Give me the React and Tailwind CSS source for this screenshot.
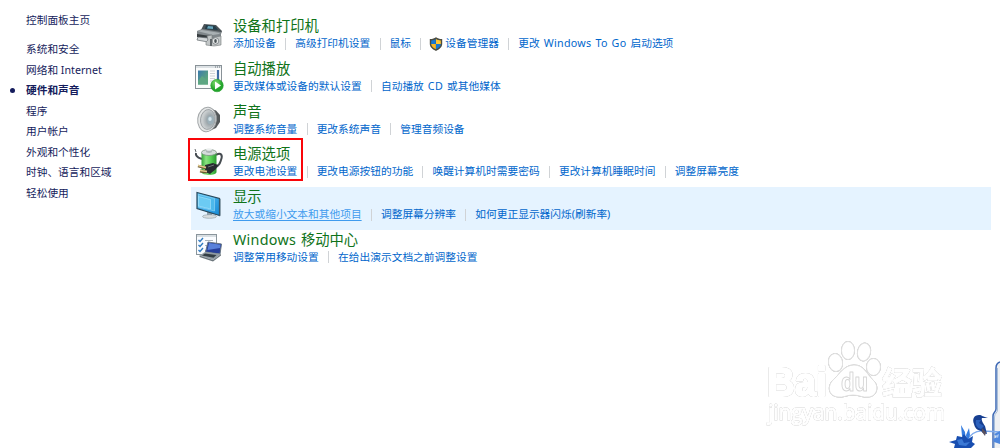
import clsx from 'clsx';

const sideLinks = [
  { label: '系统和安全' },
  { label: '网络和 Internet' },
  { label: '硬件和声音', active: true },
  { label: '程序' },
  { label: '用户帐户' },
  { label: '外观和个性化' },
  { label: '时钟、语言和区域' },
  { label: '轻松使用' },
];

const categories = [
  {
    title: '设备和打印机',
    icon: PrinterIcon,
    links: [
      { label: '添加设备' },
      { label: '高级打印机设置' },
      { label: '鼠标' },
      { label: '设备管理器', shield: true },
      { label: '更改 Windows To Go 启动选项' },
    ],
  },
  {
    title: '自动播放',
    icon: AutoplayIcon,
    links: [{ label: '更改媒体或设备的默认设置' }, { label: '自动播放 CD 或其他媒体' }],
  },
  {
    title: '声音',
    icon: SpeakerIcon,
    links: [{ label: '调整系统音量' }, { label: '更改系统声音' }, { label: '管理音频设备' }],
  },
  {
    title: '电源选项',
    icon: BatteryIcon,
    marked: true,
    links: [
      { label: '更改电池设置' },
      { label: '更改电源按钮的功能' },
      { label: '唤醒计算机时需要密码' },
      { label: '更改计算机睡眠时间' },
      { label: '调整屏幕亮度' },
    ],
  },
  {
    title: '显示',
    icon: DisplayIcon,
    hovered: true,
    links: [
      { label: '放大或缩小文本和其他项目', hovered: true },
      { label: '调整屏幕分辨率' },
      { label: '如何更正显示器闪烁(刷新率)' },
    ],
  },
  {
    title: 'Windows 移动中心',
    icon: MobilityIcon,
    links: [{ label: '调整常用移动设置' }, { label: '在给出演示文档之前调整设置' }],
  },
];

function PrinterIcon() {
  return (
    <svg viewBox="0 0 32 32" className="size-8">
      <path d="M11 5 23 6 29 12 28 15 7 13Z" fill="#4b5357" />
      <path d="M13 6 22 7 25 11 12 10Z" fill="#233e4b" />
      <path d="M15 7 20 7.5 20 10 14 9.500Z" fill="#68a6bd" />
      <path d="m4 12 5-2 19 3v7l-6 2L4 17Z" fill="#80878b" />
      <path d="M4 12 9 11l18 3-1 1-6 1Z" fill="#a9b0b3" />
      <path d="M4 15 17 17v3L4 18Z" fill="#353b3e" />
      <path d="M5 18 15 19v4L4 21Z" fill="#d4d8da" stroke="#62696d" strokeWidth=".7" />
      <path d="M14 17 19 16v4l3-2 6-1v9l-7 1-8-1v-3l2-2Z" fill="#c2c6c7" stroke="#74797b" strokeWidth=".6" />
      <path d="M17 20h2v7h-2Z" fill="#5f6568" />
      <circle cx="22.500" cy="22" r="3.300" fill="#e9ebeb" stroke="#737a7d" strokeWidth=".8" />
      <ellipse cx="22.500" cy="22" rx="1.300" ry="2" fill="#4b5356" />
    </svg>
  );
}

function AutoplayIcon() {
  return (
    <svg viewBox="0 0 32 32" className="size-8">
      <defs>
        <linearGradient id="film" x1="0" y1="0" x2="1" y2="1">
          <stop offset="0" stopColor="#3a78ad" />
          <stop offset="1" stopColor="#68b56e" />
        </linearGradient>
        <radialGradient id="play" cx=".4" cy=".3">
          <stop offset="0" stopColor="#83dc72" />
          <stop offset="1" stopColor="#23a52b" />
        </radialGradient>
      </defs>
      <rect x="2.500" y="3.500" width="26" height="23" fill="#fbfcfc" stroke="#899298" />
      <path d="M3 4h25v2H3Z" fill="#dce1e4" />
      <path d="M22 5h1M24 5h1M26 5h1" stroke="#69737a" />
      <rect x="5" y="8.500" width="10" height="14" fill="url(#film)" />
      <path d="M5 19 9 14 15 19v3.500H5Z" fill="#5da683" />
      <path d="M17 9h5M17 11.500h5M17 14h5M17 16.500h5M17 19h3" stroke="#cdd3d6" />
      <path d="M25 8v10" stroke="#3d6ca5" strokeWidth="2.200" />
      <circle cx="24" cy="23.500" r="6.300" fill="url(#play)" stroke="#249b2c" strokeWidth=".5" />
      <path d="m22 19.500 6 4-6 4Z" fill="#fff" />
    </svg>
  );
}

function SpeakerIcon() {
  return (
    <svg viewBox="0 0 32 32" className="size-8">
      <defs>
        <radialGradient id="cone" cx=".65" cy=".5">
          <stop offset="0" stopColor="#c5d6df" />
          <stop offset=".3" stopColor="#929da2" />
          <stop offset="1" stopColor="#c9cdcf" />
        </radialGradient>
      </defs>
      <path d="M15 3 23 5.500 27 10v7L23 23l-9 4Z" fill="#55595b" />
      <ellipse cx="14" cy="14.500" rx="9.300" ry="12.300" transform="rotate(7 14 14.500)" fill="#e5e7e7" stroke="#a3a7a9" />
      <ellipse cx="14.800" cy="14.500" rx="7.300" ry="10" transform="rotate(7 14.800 14.500)" fill="url(#cone)" stroke="#8b9194" strokeWidth=".7" />
      <ellipse cx="17.500" cy="15" rx="3.300" ry="4.200" fill="#9db0b9" />
      <ellipse cx="17" cy="14" rx="1.700" ry="2.100" fill="#d5e5ec" />
    </svg>
  );
}

function BatteryIcon() {
  return (
    <svg viewBox="0 0 32 32" className="size-8">
      <defs>
        <linearGradient id="cell">
          <stop offset="0" stopColor="#35a53b" />
          <stop offset=".3" stopColor="#8be382" />
          <stop offset=".65" stopColor="#55cf53" />
          <stop offset="1" stopColor="#2d9833" />
        </linearGradient>
      </defs>
      <path d="M23 8c5-3 7 0 5 5-1 3-1 5-5 7" fill="none" stroke="#464c51" strokeWidth="2" />
      <path d="M3 6c-1 4 3 5 6 6" fill="none" stroke="#464c51" strokeWidth="2" />
      <path d="m2 2 1 3" stroke="#62686b" />
      <path d="M8.500 6v19c0 4 15 4 15 0V6Z" fill="url(#cell)" />
      <ellipse cx="16" cy="5.500" rx="7.500" ry="3" fill="#d5dcdb" stroke="#7b9180" strokeWidth=".8" />
      <path d="M13 2.500v2.300c0 1.500 6 1.500 6 0V2.500Z" fill="#aeb7b8" />
      <ellipse cx="16" cy="2.500" rx="3" ry="1.300" fill="#edf0f0" />
      <path d="m12 18 8-2 5 2-2 4-6 5-5-2Z" fill="#272c30" />
      <path d="m5 19 8 2M7 24l7 1" stroke="#6b5831" strokeWidth="2.800" />
      <path d="m5 18.500 8 2M7 23.500l7 1" stroke="#e2ca8e" strokeWidth="1.400" />
      <path d="m15 20 6-2" stroke="#70757a" />
    </svg>
  );
}

function DisplayIcon() {
  return (
    <svg viewBox="0 0 32 32" className="size-8">
      <defs>
        <linearGradient id="screen" x1="0" y1="0" x2="1" y2="1">
          <stop offset="0" stopColor="#65c8f5" />
          <stop offset="1" stopColor="#168bd7" />
        </linearGradient>
      </defs>
      <path d="m14 21 5 2v3h-5Z" fill="#8fa0aa" />
      <ellipse cx="16.500" cy="26.500" rx="7" ry="1.800" fill="#d8dddf" stroke="#8b989f" strokeWidth=".6" />
      <path d="M4 2.500 26.500 8.500v17L4 18.500Z" fill="url(#screen)" stroke="#27475a" strokeWidth="1.200" />
      <path d="m5.500 4.500 16 4v12.500l-16-4Z" fill="#4db9ec" stroke="#a4dff8" strokeWidth=".5" />
      <path d="m5.500 6.500 12 3V19l-12-3Z" fill="#6ccbf3" stroke="#b8eaff" strokeWidth=".5" />
      <path d="m26.500 8.500 1 .5v16.500l-1 1Z" fill="#526a79" />
    </svg>
  );
}

function MobilityIcon() {
  return (
    <svg viewBox="0 0 32 32" className="size-8">
      <rect x="3.500" y="1.500" width="20" height="20" fill="#fafcff" stroke="#8a959c" />
      <path d="M4 2h19v2H4Z" fill="#d8dee2" />
      <path d="m5.500 7 1.500 1.500L10 5M5.500 12l1.500 1.500L10 10M5.500 17l1.500 1.500L10 15" fill="none" stroke="#317bc0" strokeWidth="1.400" />
      <path d="M12 7.500h8M12 12.500h3M12 17.500h1" stroke="#a9b3bb" />
      <path d="m15 9 13.500 2-1.500 10L12.500 19Z" fill="#273f9b" stroke="#687785" />
      <path d="m16 10 11.500 1.700-.500 3.300L14.500 17Z" fill="#5981da" />
      <path d="m12 19 16 2-8 6L6.500 22.500Z" fill="#929ca4" />
      <path d="m12 20.500 11.500 1.500-3 2.800L9 22.500Z" fill="#343e45" />
      <path d="m6.500 22.500 13.500 4.500 8-6v1.500L20 28.500 6.500 24Z" fill="#6c767c" />
    </svg>
  );
}

function ShieldIcon() {
  return (
    <svg viewBox="0 0 14 14" className="mr-0.5 -ml-px size-3.5 shrink-0">
      <path d="M7 .3C5 1.800 3 2.100.8 2V7c0 3 3 5.500 6.200 6.900C10.200 12.500 13.200 10 13.200 7V2C11 2.100 9 1.800 7 .3Z" fill="#4b4c42" />
      <path d="M6.800 2C5.500 3 4 3.400 2.200 3.400V7h4.600Z" fill="#1878d2" />
      <path d="M7 2c1.500 1 3 1.400 4.800 1.400V7H7Z" fill="#ffc632" />
      <path d="M2.200 7h4.700v5.200C4 11 2.300 9 2.200 7Z" fill="#f7b723" />
      <path d="M7 7h4.800c0 2-2 4.200-4.800 5.200Z" fill="#1878d2" />
    </svg>
  );
}

// Latin words get slightly looser tracking than the Chinese around them
function MixedText({ text }) {
  return text
    .split(/([A-Za-z][A-Za-z ]*[A-Za-z])/)
    .map((part, i) => (i % 2 ? <span key={i} className="tracking-[0.3px] [word-spacing:0.8px]">{part}</span> : part));
}

function Sidebar() {
  return (
    <nav className="w-[191px] shrink-0 pt-2.5 pl-[26px] text-[10.7px] leading-5 text-[#151c5c]">
      <a className="block">控制面板主页</a>
      <ul className="mt-[9px]">
        {sideLinks.map((link) => (
          <li key={link.label} className={clsx('flex h-[20.5px] items-center', link.active && 'font-bold')}>
            {link.active && <span className="mr-[11px] -ml-4 size-[5px] rounded-full bg-[#151c5c]" />}
            {link.label}
          </li>
        ))}
      </ul>
    </nav>
  );
}

function Category({ title, icon: Icon, links, hovered, marked }) {
  return (
    <section className={clsx('relative flex h-[42.800px] pl-[2px]', hovered && 'bg-[#e5f3ff]')}>
      <div className="mt-[3px] w-10 shrink-0">
        <Icon />
      </div>
      <div className="whitespace-nowrap">
        <h2 className="h-5 text-[14.3px] leading-5 text-[#0f7319] [word-spacing:1px]">
          <MixedText text={title} />
        </h2>
        <div className="flex h-[15px] items-center text-[10.73px] text-[#0066cc] [word-spacing:1.2px]">
          {links.map((link, i) => (
            <div key={link.label} className="flex items-center">
              {i > 0 && <span className="mr-[9px] ml-[9.3px] h-3 w-px bg-[#d0d3d6]" />}
              {link.shield && <ShieldIcon />}
              <a className={clsx('-mt-px whitespace-pre', link.hovered && 'text-[#3f9bee] underline underline-offset-2')}>
                <MixedText text={link.label} />
              </a>
            </div>
          ))}
        </div>
      </div>
      {marked && <div className="absolute -top-[6.400px] -left-[3px] h-[43px] w-[115px] border-2 border-[#fa0509]" />}
    </section>
  );
}

function Watermark() {
  return (
    <svg
      viewBox="0 0 190 96"
      className="absolute top-[338px] left-[762px] h-[96px] w-[190px] overflow-visible [filter:drop-shadow(0_0_0.7px_#aaa)]"
    >
      <g fill="#fff" stroke="#fff" strokeLinejoin="round">
        <g stroke="#e2e2e2" strokeWidth="1">
          <ellipse cx="73.500" cy="24.500" rx="7" ry="9" transform="rotate(-10 73.500 24.500)" />
          <ellipse cx="86" cy="12.500" rx="6.500" ry="9" />
          <ellipse cx="102" cy="14" rx="6.500" ry="9" transform="rotate(12 102 14)" />
          <ellipse cx="111.500" cy="29" rx="7" ry="8.500" />
          <path d="M92 27c10 0 12 8 19 15 7 6 4 17-5 17-5 1-9-2-15-2s-10 3-15 2c-10-1-11-11-5-17 7-6 11-15 21-15Z" />
        </g>
        <g fontWeight="700" className="font-['Liberation_Sans','Noto_Sans_CJK_SC',sans-serif]">
          <text x="5" y="58" fontSize="40" strokeWidth="2" textLength="60" lengthAdjust="spacingAndGlyphs">Bai</text>
          <text x="79" y="53" fontSize="25" stroke="#d6d6d6" strokeWidth="1" textLength="27" lengthAdjust="spacingAndGlyphs">du</text>
          <text x="120" y="56" fontSize="31" strokeWidth="1" textLength="60" lengthAdjust="spacingAndGlyphs">经验</text>
        </g>
        <text x="6" y="82" fontSize="21" strokeWidth="1" textLength="177" lengthAdjust="spacingAndGlyphs" className="font-['Open_Sans',sans-serif] font-medium">
          jingyan.baidu.com
        </text>
      </g>
    </svg>
  );
}

function FlowerOrnament() {
  return (
    <svg viewBox="0 0 52 90" className="absolute right-0 bottom-0 h-[90px] w-[52px]">
      <path d="M52 4c-2 1-3 3-3 5v42c0 3-3 3-3 7v32h6Z" fill="#eef0f3" />
      <path d="M52 4c-3 1-4 3-4 6v41c0 3-3 3-3 7v32" fill="none" stroke="#3d68b4" strokeWidth="1.500" />
      <path d="M49.500 10v42c0 3-3 3-3 7v31" fill="none" stroke="#a8bed9" />
      <path d="M18 84c4-8 9-12 18-11l16 1" fill="none" stroke="#7ca9ec" strokeWidth="1.400" />
      <path d="M26 66c-2-5 0-9 5-9 3 0 4 2 9 3h-6c-1 2 1 5 3 8l2 8-4-1-2-2c-4-1-6-3-7-7Z" fill="#173f91" />
      <path d="m28 62 5 0-2 3 5 3-3 3c-4-1-6-4-5-9Z" fill="#2c61bd" />
      <path d="m34 70 4 4-1 4-3-4Z" fill="#59505d" />
      <path d="m13 67 4 7 1 9-4-5ZM21 70l1 7-3 8-1-8Z" fill="#347cdf" />
      <path d="m1 84 7-2 1-4 5 1 2-3 4 5 5-3-1 6 3 2-4 4H6l1-4Z" fill="#184eb0" />
      <path d="m9 82 5-1 2 4 6-1-4 4-7-1Z" fill="#3b79d5" />
      <path d="m46 76 6-3v13l-6-2-1-3 4-2Z" fill="#4f88df" />
      <path d="m47 78 4-2-1 4Z" fill="#a5c5ef" />
    </svg>
  );
}

export default function App() {
  return (
    <div className="relative flex h-[448px] overflow-hidden bg-white font-['Noto_Sans','Noto_Sans_CJK_SC',sans-serif]" lang="zh-CN">
      <Sidebar />
      <main className="w-[800px] pt-4">
        {categories.map((category) => (
          <Category key={category.title} {...category} />
        ))}
      </main>
      <Watermark />
      <FlowerOrnament />
    </div>
  );
}
